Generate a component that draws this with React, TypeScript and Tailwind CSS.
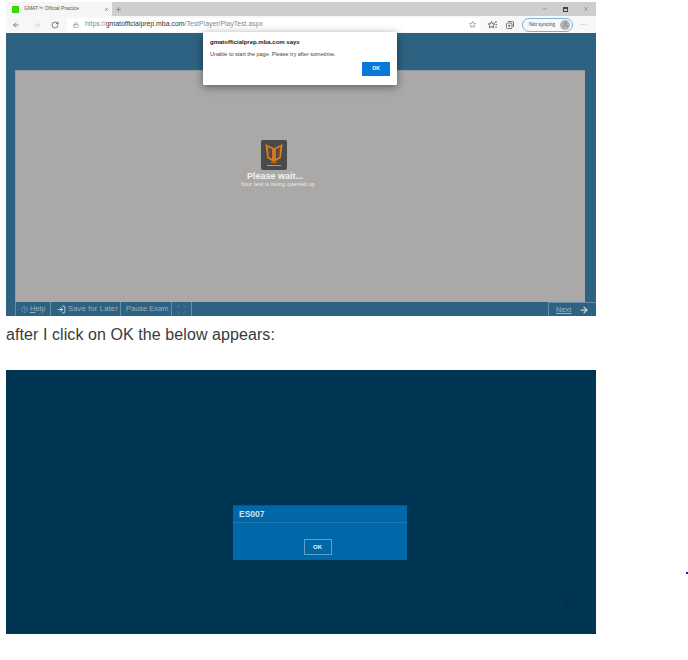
import { ArrowLeft, ArrowRight, RotateCw, Lock, Star, User, Minus, X, Plus, CircleHelp, LogIn, Maximize } from "lucide-react";

const font = "font-['Liberation_Sans',Arial,sans-serif]";

const BrowserBar = () => (
  <div className="shrink-0">
    {/* tab strip */}
    <div className="h-[14px] bg-[#cecece] flex items-stretch">
      <div className="w-[106px] bg-[#f5f5f5] flex items-center pl-[6px] pr-[3px]">
        <div className="w-[7px] h-[7px] bg-[#39d600]" />
        <span className="ml-[5px] text-[5px] text-[#555] flex-1 whitespace-nowrap">GMAT™ Official Practice</span>
        <X size={5} strokeWidth={2} className="text-[#444]" />
      </div>
      <div className="ml-[3px] flex items-center">
        <Plus size={7} className="text-[#666]" />
      </div>
      <div className="flex-1" />
      <div className="flex items-center gap-[15px] pr-[7px] text-[#666]">
        <Minus size={6} strokeWidth={2} />
        <div className="w-[5px] h-[5px] border-[1.5px] border-[#444] border-t-[2px]" />
        <X size={6} strokeWidth={2} />
      </div>
    </div>
    {/* address bar */}
    <div className="h-[17px] bg-[#f7f7f7] flex items-center">
      <ArrowLeft size={8} className="ml-[6px] text-[#555]" />
      <ArrowRight size={8} className="ml-[13px] text-[#c8c8c8]" />
      <RotateCw size={8} className="ml-[10px] text-[#444]" />
      <div className="ml-[8px] w-[413px] h-[14px] bg-white flex items-center pl-[6px]">
        <Lock size={6} className="text-[#777]" />
        <span className="ml-[6px] text-[6.9px] whitespace-nowrap text-[#888]">
          https://<span className="text-[#333]">gmatofficialprep.mba.com</span>/TestPlayer/PlayTest.aspx
        </span>
        <Star size={7} className="ml-auto mr-[4px] text-[#666]" />
      </div>
      <svg width="9" height="8" viewBox="0 0 18 16" fill="none" stroke="#444" strokeWidth="1.6" className="ml-[8px]">
        <path d="M7 1l2 4.400 4.600.5-3.400 3.100 1 4.600L7 11.200 2.800 13.600l1-4.600L.4 5.900 5 5.400z" />
        <path d="M13 2h5M15 7h3M14 12h4" />
      </svg>
      <svg width="8" height="8" viewBox="0 0 16 16" fill="none" stroke="#555" strokeWidth="1.6" className="ml-[9px]">
        <rect x="1" y="4" width="11" height="11" rx="2" />
        <path d="M4 1h9a2 2 0 0 1 2 2v9M6.500 7v5M4 9.500h5" />
      </svg>
      <div className="ml-[8px] w-[51px] h-[14px] rounded-full border border-[#7fb2d8] flex items-center justify-between pl-[6px] pr-[2px]">
        <span className="text-[5px] text-[#444] whitespace-nowrap">Not syncing</span>
        <div className="w-[10px] h-[10px] rounded-full bg-[#b5b5b5] flex items-center justify-center">
          <User size={7} className="text-[#777]" />
        </div>
      </div>
      <span className="ml-[7px] text-[7px] leading-none text-[#888]">···</span>
    </div>
  </div>
);

const FooterBtn = ({ className = "", children }: { className?: string; children: React.ReactNode }) => (
  <div className={`h-full flex items-center gap-[2px] border-r border-[#6a8da5] text-[7.5px] text-[#9fb0bd] whitespace-nowrap ${className}`}>
    {children}
  </div>
);

const TestWindow = () => (
  <div className="relative w-[590px] h-[314px] flex flex-col mt-[2px]">
    <BrowserBar />
    <div className="flex-1 bg-[#2e6282] flex flex-col pl-[9px] pr-[11px] min-h-0 pt-[37px]">
      <div className="flex-1 bg-[#aba8a8] border-t border-l border-[#8f9da8] flex flex-col items-center pt-[69px] pr-[54px]">
        <div className="w-[26px] h-[30px] rounded-[2px] bg-[#4a4a4a] flex flex-col items-center justify-center">
          <svg width="18" height="20" viewBox="0 0 18 20" fill="none">
            <path d="M1.500 1.500l6.500 3v12l-5-3zM16.500 1.500l-6.500 3v12l5-3z" stroke="#e07b1e" strokeWidth="1.8" />
            <path d="M4 4v8M14 4v8" stroke="#8a5a2a" strokeWidth="1" />
            <path d="M6 18.500h6" stroke="#c46a18" strokeWidth="1" />
          </svg>
          <div className="w-[14px] h-[1px] mt-[1px] bg-[#9a9a9a]" />
        </div>
        <div className="mt-[1px] ml-[3px] text-[9px] leading-[10px] font-bold text-[#f2f2f2]">Please wait...</div>
        <div className="ml-[8px] text-[5.7px] leading-[7px] tracking-[0.1px] text-[#ececec]">Your test is being opened up</div>
      </div>
      <div className="h-[14px] shrink-0 flex items-stretch text-[#9fb0bd]">
        <div className="w-[1px] bg-[#6a8da5]" />
        <FooterBtn className="pl-[5px] w-[35px]">
          <CircleHelp size={7} strokeWidth={1.5} />
          <span><span className="underline">H</span>elp</span>
        </FooterBtn>
        <FooterBtn className="pl-[6px] w-[70px]">
          <LogIn size={9} strokeWidth={2.5} className="text-[#cdd6dd]" />
          <span className="tracking-[0.2px]">Save for Later</span>
        </FooterBtn>
        <FooterBtn className="pl-[5px] w-[51px]">Pause Exam</FooterBtn>
        <FooterBtn className="pl-[4px] w-[20px]">
          <Maximize size={11} strokeWidth={1} className="text-[#6f92a9]" />
        </FooterBtn>
        <div className="flex-1" />
        <div className="-mr-[11px] w-[48px] border-l border-t border-[#6a8da5] flex items-center pl-[7px] text-[7.5px]">
          <span className="underline">Next</span>
          <ArrowRight size={10} strokeWidth={3} className="ml-auto mr-[7px] text-[#cdd6dd]" />
        </div>
      </div>
    </div>

    {/* browser alert */}
    <div className="absolute left-[197px] top-[30px] w-[194px] h-[53px] bg-white rounded-[1px] shadow-[0_2px_8px_rgba(0,0,0,0.45)] pl-[7px] pr-[7px] pt-[6px]">
      <div className="text-[6px] leading-[8px] font-bold text-[#222]">gmatofficialprep.mba.com says</div>
      <div className="mt-[5px] text-[5.5px] leading-[7px] text-[#444]">Unable to start the page. Please try after sometime.</div>
      <div className="flex justify-end mt-[4px]">
        <button className="w-[28px] h-[14px] bg-[#0a78d7] text-white text-[5px] font-bold">OK</button>
      </div>
    </div>
  </div>
);

const ErrorScreen = () => (
  <div className="relative w-[590px] h-[264px] bg-[#003553] flex flex-col items-center pt-[135px] pl-[50px] pr-[12px]">
    <div className="w-[174px] h-[55px] bg-[#0068a8] border-t border-[#005a92]">
      <div className="h-[17px] border-b border-[#1f78b0] flex items-center pl-[6px] text-[8.5px] font-bold text-[#cfe2ef]">ES007</div>
      <div className="flex justify-center pt-[16px] pr-[5px]">
        <button className="w-[28px] h-[16px] border border-[#5f9fc8] text-[6px] font-bold text-[#e6f0f7]">OK</button>
      </div>
    </div>
    {/* faint marks left in the corner of the capture */}
    <div className="absolute left-[508px] top-[229px] w-[6px] h-[10px] bg-[#00334f]" />
    <div className="absolute left-[556px] top-[229px] w-[13px] h-[14px] rounded-full bg-[#00334f]" />
  </div>
);

export default function App() {
  return (
    <div className={`relative w-[688px] h-[660px] bg-white pl-[6px] ${font}`}>
      <TestWindow />
      <p className="mt-[9px] text-[16px] leading-[20px] tracking-[0.08px] text-[#3a3a3a]">after I click on OK the below appears:</p>
      <div className="mt-[25px]">
        <ErrorScreen />
      </div>
      <div className="absolute left-[686px] top-[570px] w-[2px] h-[2px] bg-[#1a1ad0]" />
    </div>
  );
}
